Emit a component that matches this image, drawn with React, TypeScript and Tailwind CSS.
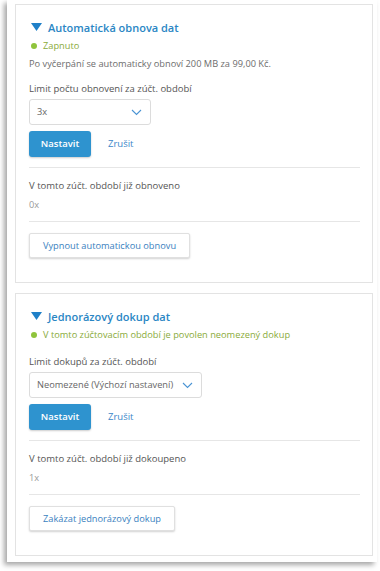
import React from "react";

function Chevron() {
  return (
    <svg width="11" height="7" viewBox="0 0 11 7" fill="none">
      <path d="M1 1l4.5 4.5L10 1" stroke="#4a94d4" strokeWidth="1.1" />
    </svg>
  );
}

function Triangle() {
  return (
    <svg width="11" height="8" viewBox="0 0 11 8">
      <path d="M0 0h11L5.5 8z" fill="#1f80c8" />
    </svg>
  );
}

type CardProps = {
  title: string;
  status: string;
  desc?: string;
  limitLabel: string;
  selectValue: string;
  selectWidth: string;
  doneLabel: string;
  doneValue: string;
  action: string;
  actionWidth: string;
  mb: string;
};

function Card(p: CardProps) {
  return (
    <div className={`border border-[#e3e3e3] bg-white pl-[13px] pr-[12px] ${p.mb}`}>
      <div className="flex items-center gap-[6px] pl-[2px] pt-[12px] h-[32px]">
        <Triangle />
        <span className="text-[11px] font-semibold text-[#2a86c4] leading-none">{p.title}</span>
      </div>
      <div className="flex items-center gap-[6px] pl-[2px] mt-[2px] h-[14px]">
        <span className="w-[6px] h-[6px] rounded-full bg-[#8fc43c]" />
        <span className="text-[9.25px] text-[#8aab3a] leading-none whitespace-nowrap">{p.status}</span>
      </div>
      {p.desc ? (
        <div className="text-[9.25px] text-[#6d6d6d] mt-[4px] h-[14px] leading-[14px] whitespace-nowrap">{p.desc}</div>
      ) : null}
      <div className={`text-[9.5px] text-[#555] leading-[14px] ${p.desc ? "mt-[11px]" : "mt-[13px]"}`}>{p.limitLabel}</div>
      <div
        className={`mt-[3px] h-[26px] border border-[#dcdcdc] rounded-[3px] flex items-center justify-between pl-[7px] pr-[8px] text-[9.25px] text-[#666] whitespace-nowrap ${p.selectWidth}`}
      >
        <span>{p.selectValue}</span>
        <Chevron />
      </div>
      <div className="mt-[6px] flex items-center">
        <div className="w-[62px] h-[26px] rounded-[3px] bg-[#2e93cf] text-white text-[9.5px] font-semibold flex items-center justify-center shadow-[0_1px_2px_rgba(0,0,0,0.2)]">
          Nastavit
        </div>
        <span className="ml-[17px] text-[9.5px] text-[#3a86c8]">Zrušit</span>
      </div>
      <div className="mt-[10px] border-t border-[#e6e6e6]" />
      <div className="mt-[11px] text-[9.5px] text-[#555] leading-[14px]">{p.doneLabel}</div>
      <div className="mt-[5px] text-[9.25px] text-[#9a9a9a] leading-[14px]">{p.doneValue}</div>
      <div className="mt-[9px] border-t border-[#e6e6e6]" />
      <div
        className={`mt-[11px] h-[25px] border border-[#e0e0e0] rounded-[2px] bg-white shadow-[0_1px_2px_rgba(0,0,0,0.18)] flex items-center justify-center text-[9.25px] text-[#3a7fc0] whitespace-nowrap ${p.actionWidth}`}
      >
        {p.action}
      </div>
      <div className="h-[24px]" />
    </div>
  );
}

export default function App() {
  return (
    <div className="w-[380px] h-[571px] bg-white" style={{ fontFamily: '"Open Sans", "Noto Sans", sans-serif' }}>
      <div className="ml-[7px] w-[370px] pt-[4px] pl-[8px] pr-[4px] pb-[6px] bg-white shadow-[-3px_3px_5px_rgba(0,0,0,0.35)]">
        <Card
          title="Automatická obnova dat"
          status="Zapnuto"
          desc="Po vyčerpání se automaticky obnoví 200 MB za 99,00 Kč."
          limitLabel="Limit počtu obnovení za zúčt. období"
          selectValue="3x"
          selectWidth="w-[122px]"
          doneLabel="V tomto zúčt. období již obnoveno"
          doneValue="0x"
          action="Vypnout automatickou obnovu"
          actionWidth="w-[161px]"
          mb="mb-[10px]"
        />
        <Card
          title="Jednorázový dokup dat"
          status="V tomto zúčtovacím období je povolen neomezený dokup"
          limitLabel="Limit dokupů za zúčt. období"
          selectValue="Neomezené (Výchozí nastavení)"
          selectWidth="w-[173px]"
          doneLabel="V tomto zúčt. období již dokoupeno"
          doneValue="1x"
          action="Zakázat jednorázový dokup"
          actionWidth="w-[146px]"
          mb=""
        />
      </div>
    </div>
  );
}
